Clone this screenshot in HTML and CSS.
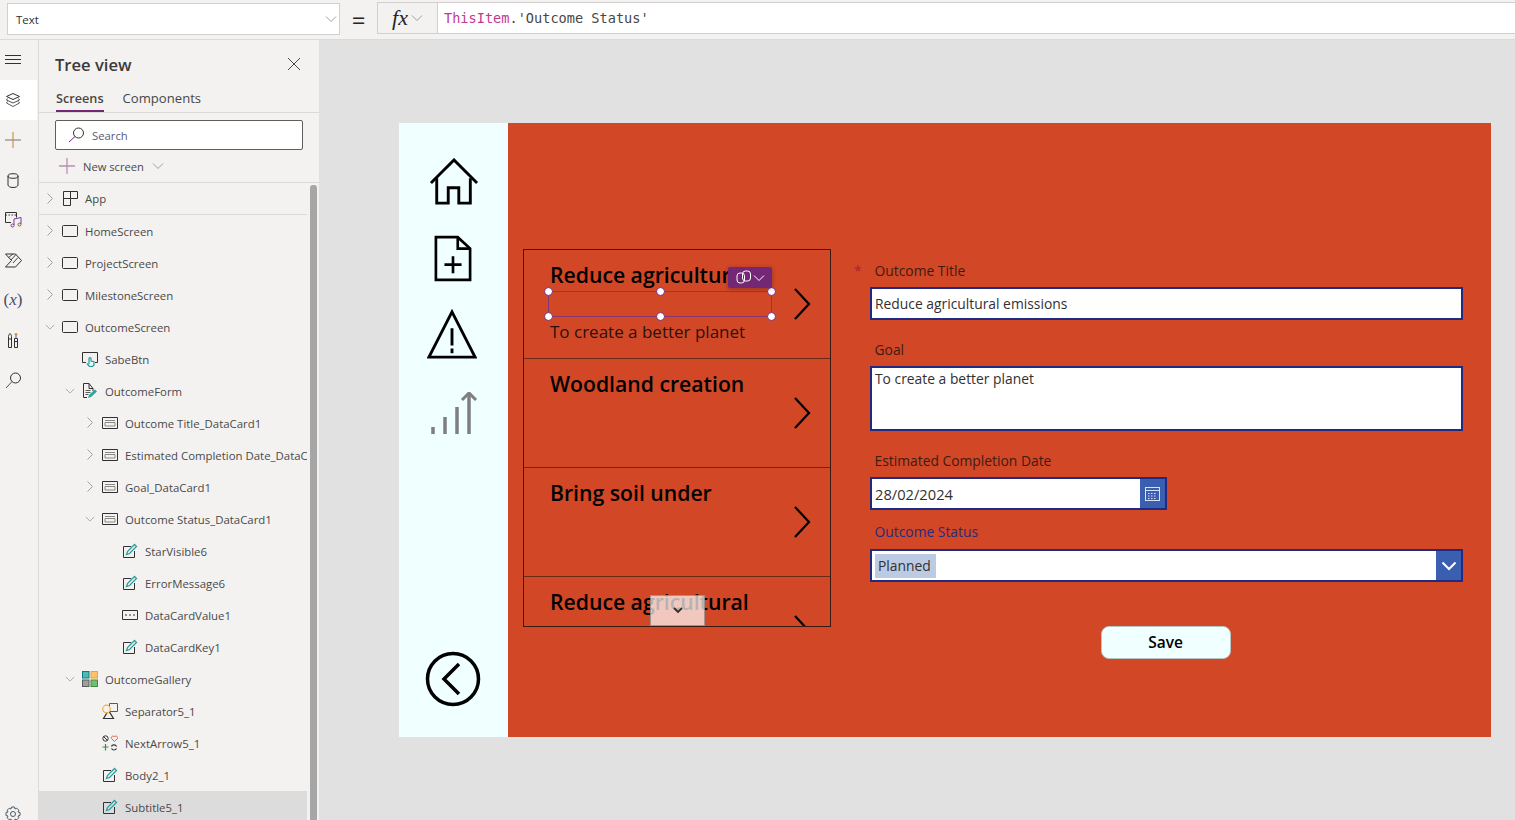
FILE: index.html
```html
<!DOCTYPE html>
<html>
<head>
    <title>Outcome Screen</title>
    <link rel="stylesheet" href="styles.css">
</head>
<body>
    <svg class="defs" width="0" height="0">
        <symbol id="chev-r" viewBox="0 0 10 12"><path d="M2.500 .5l5 5-5 5" fill="none" stroke="#a19f9d"/></symbol>
        <symbol id="chev-d" viewBox="0 0 12 10"><path d="M1 2.500l5 5 5-5" fill="none" stroke="#a19f9d"/></symbol>
        <symbol id="i-screen" viewBox="0 0 16 16"><rect x="0.500" y="2.500" width="15" height="11" rx="1" fill="none" stroke="#323130"/></symbol>
        <symbol id="i-app" viewBox="0 0 16 16"><path d="M1.500.5h14v7h-7v7h-7zM1.500 7.500h7M8.500.5v7" fill="none" stroke="#323130"/></symbol>
        <symbol id="i-card" viewBox="0 0 16 16"><path d="M.5 2.500h15v11H.5z" fill="none" stroke="#323130"/><path d="M3 5.500h10M3 7.500h10v3.500H3z" fill="none" stroke="#8a8886"/></symbol>
        <symbol id="i-edit" viewBox="0 0 16 16"><path d="M9 3.500H1.500v11h11V8" fill="none" stroke="#323130"/><path d="M4.500 11.500l1-3L12.500 1.500l2 2-7 7z" fill="none" stroke="#2a9d9d" stroke-width="1.300"/></symbol>
        <symbol id="i-input" viewBox="0 0 16 16"><path d="M.5 3.500h15v9H.5z" fill="none" stroke="#323130"/><path d="M3 8h2M7 8h2M11 8h2" stroke="#323130"/></symbol>
    </svg>

    <header class="topbar">
        <div class="prop-select">
            <span>Text</span>
            <svg class="prop-chev" width="12" height="10"><use href="#chev-d"/></svg>
        </div>
        <div class="equals">=</div>
        <div class="fx-btn">
            <span class="fx">fx</span>
            <svg width="12" height="10"><use href="#chev-d"/></svg>
        </div>
        <div class="formula"><span class="kw">ThisItem</span>.'Outcome Status'</div>
    </header>

    <div class="workspace">
        <nav class="rail">
            <div class="rail-item">
                <svg width="18" height="12" viewBox="0 0 18 12"><path d="M1 1.500h16M1 5.500h16M1 9.500h16" stroke="#323130"/></svg>
            </div>
            <div class="rail-item active">
                <svg width="16" height="16" viewBox="0 0 16 16" fill="none" stroke="#323130"><path d="M8 1.500l6.500 3L8 7.500l-6.500-3z"/><path d="M2.500 6.500L1.500 8 8 11l6.500-3-1-1.500" stroke="#4a4a6a"/><path d="M2.500 9.500l-1 1.500L8 14.500 14.500 11l-1-1.500" stroke="#6a5a4a"/></svg>
            </div>
            <div class="rail-item">
                <svg width="16" height="16" viewBox="0 0 16 16"><path d="M0 8h16" stroke="#8a8886" stroke-width="1.200"/><path d="M8 0v16" stroke="#c8944a" stroke-width="1.200"/></svg>
            </div>
            <div class="rail-item">
                <svg width="12" height="15" viewBox="0 0 12 15" fill="none" stroke="#323130"><path d="M1 3v9c0 1.400 2.200 2.500 5 2.500s5-1.100 5-2.500V3"/><ellipse cx="6" cy="3" rx="5" ry="2.300"/></svg>
            </div>
            <div class="rail-item">
                <svg width="17" height="16" viewBox="0 0 17 16" fill="none" stroke="#323130"><path d="M.5.500h11v5M.5.500v10H6"/><path d="M.5 3h11" stroke-dasharray="1.500 1.500"/><path d="M9 13V7l7-1.500V12" stroke="#7a3a9a"/><circle cx="7.500" cy="13.500" r="1.500" stroke="#7a3a9a"/><circle cx="14.500" cy="12.500" r="1.500" stroke="#8a5a2a"/></svg>
            </div>
            <div class="rail-item">
                <svg width="17" height="15" viewBox="0 0 17 15" fill="none" stroke="#323130"><path d="M.5 1h10l6 6.500-6 6.500H.5l6-6.500z"/><path d="M3.500 4.500L8 1M6 7l5-5.500M8 10l5-5.500" stroke-width=".9"/></svg>
            </div>
            <div class="rail-item rail-x">(<i>x</i>)</div>
            <div class="rail-item">
                <svg width="10" height="17" viewBox="0 0 10 17" fill="none" stroke="#323130"><path d="M.5 4.500c0-1 .5-2 1.500-3 1 1 1.500 2 1.500 3v11h-3zM6.500 6.500h3v9h-3zM.5 7h3M6.500 9.500h3"/><path d="M8 1v5.500" stroke="#7a3a9a"/><path d="M6.500 2.500h3" stroke="#c8944a"/></svg>
            </div>
            <div class="rail-item">
                <svg width="17" height="17" viewBox="0 0 17 17" fill="none" stroke="#323130"><circle cx="10.500" cy="6" r="5"/><path d="M7 9.500L1 16" stroke="#7a3a5a"/></svg>
            </div>
            <div class="rail-gear">
                <svg width="16" height="16" viewBox="0 0 16 16" fill="none" stroke="#4a5a6a"><circle cx="8" cy="8" r="2.500"/><path d="M6.500 1h3l.5 2 1.800-.8 2 2-.8 1.800 2 .5v3l-2 .5.8 1.800-2 2-1.800-.8-.5 2h-3l-.5-2-1.800.8-2-2 .8-1.800-2-.5v-3l2-.5-.8-1.800 2-2 1.800.8z"/></svg>
            </div>
        </nav>

        <aside class="panel">
            <div class="panel-head">
                <h2>Tree view</h2>
                <svg width="14" height="14" viewBox="0 0 14 14"><path d="M1 1l12 12M13 1L1 13" stroke="#4a4948"/></svg>
            </div>
            <div class="tabs">
                <span class="tab current">Screens</span>
                <span class="tab">Components</span>
            </div>
            <div class="search">
                <svg width="17" height="16" viewBox="0 0 17 16" fill="none"><circle cx="10.500" cy="6" r="5" stroke="#323130"/><path d="M7 9.500L1 15" stroke="#742774"/></svg>
                <span>Search</span>
            </div>
            <div class="new-screen">
                <svg width="16" height="16" viewBox="0 0 16 16"><path d="M8 0v16M0 8h16" stroke="#b78fb7" stroke-width="1.300"/></svg>
                <span>New screen</span>
                <svg width="12" height="10"><use href="#chev-d"/></svg>
            </div>

            <div class="tree-wrap">
                <ul class="tree">
                    <li class="row lv0 app-row"><svg class="chev" width="10" height="12"><use href="#chev-r"/></svg><svg class="ico" width="16" height="16"><use href="#i-app"/></svg><span>App</span></li>
                    <li class="row lv0"><svg class="chev" width="10" height="12"><use href="#chev-r"/></svg><svg class="ico" width="16" height="16"><use href="#i-screen"/></svg><span>HomeScreen</span></li>
                    <li class="row lv0"><svg class="chev" width="10" height="12"><use href="#chev-r"/></svg><svg class="ico" width="16" height="16"><use href="#i-screen"/></svg><span>ProjectScreen</span></li>
                    <li class="row lv0"><svg class="chev" width="10" height="12"><use href="#chev-r"/></svg><svg class="ico" width="16" height="16"><use href="#i-screen"/></svg><span>MilestoneScreen</span></li>
                    <li class="row lv0"><svg class="chev" width="10" height="12"><use href="#chev-d"/></svg><svg class="ico" width="16" height="16"><use href="#i-screen"/></svg><span>OutcomeScreen</span></li>
                    <li class="row lv1"><span class="chev"></span>
                        <svg class="ico" width="16" height="16" viewBox="0 0 16 16" fill="none"><path d="M4 11.500H.5v-10h15v10H13" stroke="#323130"/><path d="M7 13V7.500c0-1.300 2-1.300 2 0V10l3 .7V14l-1.500 1.500H7.500L5 12.500" stroke="#1f9a9a" stroke-width="1.200"/></svg>
                        <span>SabeBtn</span></li>
                    <li class="row lv1"><svg class="chev" width="10" height="12"><use href="#chev-d"/></svg>
                        <svg class="ico" width="16" height="16" viewBox="0 0 16 16" fill="none"><path d="M11 5.500V8M5 14.500H1.500V.5h5.500l4 5h-4V.5" stroke="#323130"/><path d="M3.500 7.500h5M3.500 9.500h5M3.500 11.500h3" stroke="#323130" stroke-width=".8"/><path d="M6 15l1-3 6-5.500 2 2-6 5.500z" fill="#2aa5a5"/></svg>
                        <span>OutcomeForm</span></li>
                    <li class="row lv2"><svg class="chev" width="10" height="12"><use href="#chev-r"/></svg><svg class="ico" width="16" height="16"><use href="#i-card"/></svg><span>Outcome Title_DataCard1</span></li>
                    <li class="row lv2"><svg class="chev" width="10" height="12"><use href="#chev-r"/></svg><svg class="ico" width="16" height="16"><use href="#i-card"/></svg><span class="clip-label">Estimated Completion Date_DataC</span></li>
                    <li class="row lv2"><svg class="chev" width="10" height="12"><use href="#chev-r"/></svg><svg class="ico" width="16" height="16"><use href="#i-card"/></svg><span>Goal_DataCard1</span></li>
                    <li class="row lv2"><svg class="chev" width="10" height="12"><use href="#chev-d"/></svg><svg class="ico" width="16" height="16"><use href="#i-card"/></svg><span>Outcome Status_DataCard1</span></li>
                    <li class="row lv3"><span class="chev"></span><svg class="ico" width="16" height="16"><use href="#i-edit"/></svg><span>StarVisible6</span></li>
                    <li class="row lv3"><span class="chev"></span><svg class="ico" width="16" height="16"><use href="#i-edit"/></svg><span>ErrorMessage6</span></li>
                    <li class="row lv3"><span class="chev"></span><svg class="ico" width="16" height="16"><use href="#i-input"/></svg><span>DataCardValue1</span></li>
                    <li class="row lv3"><span class="chev"></span><svg class="ico" width="16" height="16"><use href="#i-edit"/></svg><span>DataCardKey1</span></li>
                    <li class="row lv1"><svg class="chev" width="10" height="12"><use href="#chev-d"/></svg>
                        <svg class="ico" width="16" height="16" viewBox="0 0 16 16"><rect x=".5" y=".5" width="6.500" height="6.500" fill="#4fb9b9" stroke="#0f7c7c"/><rect x="9" y=".5" width="6.500" height="6.500" fill="#ffc266" stroke="#e8a33d"/><rect x=".5" y="9" width="6.500" height="6.500" fill="#a19f9d" stroke="#5a5a5a"/><rect x="9" y="9" width="6.500" height="6.500" fill="#7ab87a" stroke="#3d8f3d"/></svg>
                        <span>OutcomeGallery</span></li>
                    <li class="row lv2"><span class="chev"></span>
                        <svg class="ico" width="16" height="16" viewBox="0 0 16 16" fill="none"><path d="M7.500 .5h8v8h-8z" stroke="#0f7c7c"/><path d="M9 15.500H1.500l5-8 5 8z" stroke="#323130" stroke-width="1.200"/><circle cx="4.500" cy="6" r="3.800" fill="#f3f2f1" stroke="#f0b13d" stroke-width="1.200"/></svg>
                        <span>Separator5_1</span></li>
                    <li class="row lv2"><span class="chev"></span>
                        <svg class="ico" width="16" height="16" viewBox="0 0 16 16" fill="none"><circle cx="3.500" cy="3.500" r="2.700" stroke="#323130"/><path d="M1.500 1.500l4 4" stroke="#323130"/><path d="M12.500 6.500l-3-3c-1.200-1.800 2-3.500 3-1.500 1-2 4.200-.3 3 1.500z" stroke="#e8613d"/><path d="M3.500 9v6.500M.5 12h6" stroke="#3d8f3d" stroke-width="1.200"/><path d="M9.500 11.500c.5-2 4-2.500 5 0M14.500 13.500c-1 2-4 2-5 0" stroke="#323130" stroke-width="1.200"/></svg>
                        <span>NextArrow5_1</span></li>
                    <li class="row lv2"><span class="chev"></span><svg class="ico" width="16" height="16"><use href="#i-edit"/></svg><span>Body2_1</span></li>
                    <li class="row lv2 selected"><span class="chev"></span><svg class="ico" width="16" height="16"><use href="#i-edit"/></svg><span>Subtitle5_1</span></li>
                </ul>
                <div class="scrollbar"></div>
            </div>
        </aside>

        <main class="canvas">
            <div class="app">
                <div class="app-side">
                    <svg class="side-ico home" width="50" height="48" viewBox="0 0 52 50" fill="none" stroke="#000" stroke-width="3"><path d="M2 26L26 2l24 24"/><path d="M8 21v26h12V31h11v16h12V21"/></svg>
                    <svg class="side-ico doc" width="38" height="48" viewBox="0 0 40 50" fill="none" stroke="#000" stroke-width="2.800"><path d="M2 2h23l13 12v33H2z"/><path d="M25 2v12h13"/><path d="M20 22v18M11 31h18"/></svg>
                    <svg class="side-ico warn" width="50" height="50" viewBox="0 0 52 52" fill="none" stroke="#000" stroke-width="3"><path d="M26 3l24 47H2z"/><path d="M26 20v18M26 41v5"/></svg>
                    <svg class="side-ico dim" width="50" height="42" viewBox="0 0 50 42" fill="none" stroke="#7f7f7f" stroke-width="3.500"><path d="M5 35v7M17 25v17M29 15v27M41 1v41"/><path d="M34 8l7-7 7 7" stroke-width="3"/></svg>
                    <svg class="side-back" width="56" height="56" viewBox="0 0 56 56" fill="none" stroke="#000" stroke-width="3.500"><circle cx="28" cy="28" r="25.500"/><path d="M34 13L19 28l15 15"/></svg>
                </div>

                <div class="app-main">
                    <div class="gallery">
                        <div class="g-row">
                            <h3>Reduce agricultural</h3>
                            <p class="g-body">To create a better planet</p>
                            <svg class="g-arrow" width="18" height="32" viewBox="0 0 18 32" fill="none" stroke="#000" stroke-width="2.200"><path d="M2 1l14 15L2 31"/></svg>
                            <div class="sel-box">
                                <i class="handle tl"></i><i class="handle tm"></i><i class="handle tr"></i>
                                <i class="handle bl"></i><i class="handle bm"></i><i class="handle br"></i>
                            </div>
                            <div class="copilot">
                                <svg width="16" height="15" viewBox="0 0 16 15" fill="none" stroke="#fff"><rect x="1" y="3" width="7.500" height="10" rx="3"/><rect x="6.500" y="1" width="8" height="10" rx="3"/></svg>
                                <svg width="12" height="10" viewBox="0 0 12 10"><path d="M1 2.500l5 5 5-5" fill="none" stroke="#fff"/></svg>
                            </div>
                        </div>
                        <div class="g-row">
                            <h3>Woodland creation</h3>
                            <svg class="g-arrow" width="18" height="32" viewBox="0 0 18 32" fill="none" stroke="#000" stroke-width="2.200"><path d="M2 1l14 15L2 31"/></svg>
                        </div>
                        <div class="g-row">
                            <h3>Bring soil under</h3>
                            <svg class="g-arrow" width="18" height="32" viewBox="0 0 18 32" fill="none" stroke="#000" stroke-width="2.200"><path d="M2 1l14 15L2 31"/></svg>
                        </div>
                        <div class="g-row">
                            <h3>Reduce agricultural</h3>
                            <svg class="g-arrow" width="18" height="32" viewBox="0 0 18 32" fill="none" stroke="#000" stroke-width="2.200"><path d="M2 1l14 15L2 31"/></svg>
                        </div>
                        <div class="g-more">
                            <svg width="10" height="7" viewBox="0 0 10 7"><path d="M1 1l4 4 4-4" fill="none" stroke="#3a2a28" stroke-width="1.800"/></svg>
                        </div>
                    </div>

                    <form class="form">
                        <label class="f-label f-first"><span class="star">*</span>Outcome Title</label>
                        <div class="f-input">Reduce agricultural emissions</div>

                        <label class="f-label f-goal">Goal</label>
                        <div class="f-input f-area">To create a better planet</div>

                        <label class="f-label f-date-label">Estimated Completion Date</label>
                        <div class="f-input f-date">
                            <span class="f-text">28/02/2024</span>
                            <span class="f-btn">
                                <svg width="15" height="14" viewBox="0 0 15 14" fill="none" stroke="#d9e2f3"><rect x=".5" y=".5" width="14" height="13"/><path d="M.5 3.500h14"/><path d="M3 6.500h9M3 9h9M3 11.500h9" stroke-dasharray="1.500 1.500"/></svg>
                            </span>
                        </div>

                        <label class="f-label f-status-label">Outcome Status</label>
                        <div class="f-input f-drop">
                            <span class="chip">Planned</span>
                            <span class="f-btn">
                                <svg width="16" height="10" viewBox="0 0 16 10"><path d="M1.500 1.500L8 8l6.500-6.500" fill="none" stroke="#fff" stroke-width="2"/></svg>
                            </span>
                        </div>

                        <div class="f-actions"><button type="button" class="save">Save</button></div>
                    </form>
                </div>
            </div>
        </main>
    </div>
</body>
</html>
```

FILE: styles.css
```css
/* Page */
html, body {
    height: 100%;
}

body {
    margin: 0;
    overflow: hidden;
    background-color: #f3f2f1;
    color: #323130;
    font-family: "Open Sans", "Liberation Sans", sans-serif;
}

.defs {
    position: absolute;
}

/* Formula bar */
.topbar {
    display: flex;
    align-items: flex-start;
    height: 40px;
    padding-top: 3px;
    box-sizing: border-box;
    border-bottom: 1px solid #dcdad8;
}

.prop-select {
    display: flex;
    align-items: center;
    justify-content: space-between;
    box-sizing: border-box;
    width: 333px;
    height: 32px;
    margin-left: 7px;
    padding: 0 2px 0 8px;
    background-color: #fff;
    border: 1px solid #d2d0ce;
    font-size: 11.500px;
}

.equals {
    width: 37px;
    text-align: center;
    font-size: 24px;
    line-height: 33px;
    color: #252423;
}

.fx-btn {
    display: flex;
    align-items: center;
    justify-content: center;
    gap: 3px;
    box-sizing: border-box;
    width: 61px;
    height: 32px;
    margin-top: -1px;
    background-color: #f3f2f1;
    border: 1px solid #d2d0ce;
}

.fx {
    font-family: "Liberation Serif", serif;
    font-style: italic;
    font-size: 22px;
    color: #252423;
}

.formula {
    flex: 1;
    box-sizing: border-box;
    height: 32px;
    margin-top: -1px;
    padding-left: 6px;
    background-color: #fff;
    border-top: 1px solid #d2d0ce;
    border-bottom: 1px solid #d2d0ce;
    font-family: "DejaVu Sans Mono", monospace;
    font-size: 13.600px;
    line-height: 30px;
    color: #484644;
}

.kw {
    color: #c03a92;
}

/* Main area */
.workspace {
    display: flex;
    height: 780px;
}

.rail {
    display: flex;
    flex-direction: column;
    width: 38px;
    flex-shrink: 0;
    border-right: 1px solid #dcdad8;
}

.rail-item {
    display: flex;
    align-items: center;
    justify-content: center;
    box-sizing: border-box;
    height: 40px;
    padding-right: 12px;
    flex-shrink: 0;
}

.rail-item.active {
    background-color: #fff;
    margin-right: 1px;
    padding-right: 11px;
}

.rail-x {
    font-family: "Liberation Serif", serif;
    font-size: 17px;
    color: #4a4a6a;
}

.rail-gear {
    display: flex;
    justify-content: center;
    margin-top: auto;
    height: 14px;
    padding-right: 12px;
}

/* Tree panel */
.panel {
    width: 280px;
    flex-shrink: 0;
    display: flex;
    flex-direction: column;
    border-right: 1px solid #e1dfdd;
}

.panel-head {
    display: flex;
    align-items: center;
    justify-content: space-between;
    height: 48px;
    padding: 0 18px 0 16px;
}

.panel-head h2 {
    margin: 0;
    font-size: 16.600px;
    font-weight: 600;
    color: #3b3a39;
}

.tabs {
    display: flex;
    gap: 19px;
    height: 24px;
    padding-left: 17px;
    border-bottom: 1px solid #dcdad8;
    font-size: 13.100px;
}

.tab {
    line-height: 21px;
    color: #484644;
}

.tab.current {
    height: 24px;
    border-bottom: 2px solid #742774;
    box-sizing: border-box;
    font-size: 12.700px;
    font-weight: 600;
}

.search {
    display: flex;
    align-items: center;
    gap: 7px;
    box-sizing: border-box;
    height: 30px;
    margin: 7px 16px 0;
    padding-left: 12px;
    background-color: #fff;
    border: 1px solid #605e5c;
    border-radius: 2px;
    font-size: 11.300px;
    color: #5a5a72;
}

.new-screen {
    display: flex;
    align-items: center;
    height: 32px;
    padding-left: 20px;
    border-bottom: 1px solid #dcdad8;
    font-size: 11.200px;
    color: #4a4948;
}

.new-screen span {
    margin: 0 8px;
}

.tree-wrap {
    display: flex;
    flex: 1;
    min-height: 0;
}

.tree {
    flex: 1;
    min-width: 0;
    margin: 0;
    padding: 0;
    list-style: none;
    overflow: hidden;
}

.row {
    display: flex;
    align-items: center;
    height: 32px;
    box-sizing: border-box;
    white-space: nowrap;
    overflow: hidden;
    font-size: 11.400px;
    color: #4a4948;
}

.lv0 { padding-left: 6px; }
.lv1 { padding-left: 26px; }
.lv2 { padding-left: 46px; }
.lv3 { padding-left: 66px; }

.app-row {
    border-bottom: 1px solid #dcdad8;
}

.selected {
    background-color: #dcdcdc;
}

.chev {
    flex-shrink: 0;
    width: 10px;
    height: 12px;
    margin-right: 7px;
}

.ico {
    flex-shrink: 0;
    margin-right: 7px;
}

.scrollbar {
    width: 7px;
    margin: 2px 2px 0 3px;
    background-color: #a6a6a6;
    border-radius: 3px 3px 0 0;
}

/* Canvas */
.canvas {
    flex: 1;
    min-width: 0;
    padding: 83px 0 0 79px;
    background-color: #e1e1e1;
}

.app {
    display: flex;
    width: 1092px;
    height: 614px;
}

.app-side {
    display: flex;
    flex-direction: column;
    align-items: center;
    width: 109px;
    flex-shrink: 0;
    background-color: #f0ffff;
}

.home {
    margin-top: 35px;
}

.doc {
    margin: 29px 2px 0 0;
}

.warn {
    margin: 26px 4px 0 0;
}

.dim {
    margin: 33px 2px 0 0;
}

.side-back {
    margin: auto 2px 30px 0;
}

.app-main {
    flex: 1;
    display: flex;
    align-items: flex-start;
    background-color: #d24726;
}

/* Gallery */
.gallery {
    position: relative;
    width: 308px;
    height: 378px;
    margin: 126px 0 0 15px;
    box-sizing: border-box;
    border: 1px solid #3b1a12;
    overflow: hidden;
    flex-shrink: 0;
}

.g-row {
    position: relative;
    height: 109px;
    box-sizing: border-box;
    padding: 8px 0 0 26px;
    border-bottom: 1px solid #6a2a18;
}

.g-row h3 {
    margin: 0;
    font-size: 21.200px;
    font-weight: 600;
    line-height: 33px;
    color: #000;
}

.g-body {
    margin: 29px 0 0;
    font-size: 17px;
    line-height: 24px;
    color: #2a120c;
}

.g-arrow {
    position: absolute;
    left: 269px;
    top: 38px;
}

.sel-box {
    position: absolute;
    left: 24px;
    top: 41px;
    width: 224px;
    height: 26px;
    box-sizing: border-box;
    border: 1px solid #8a3570;
}

.handle {
    position: absolute;
    width: 9px;
    height: 9px;
    background-color: #fff;
    border: 1px solid #742774;
    border-radius: 50%;
    box-sizing: border-box;
}

.tl, .bl { left: -5px; }
.tm, .bm { left: 107px; }
.tr, .br { right: -5px; }
.tl, .tm, .tr { top: -5px; }
.bl, .bm, .br { bottom: -5px; }

.copilot {
    position: absolute;
    left: 204px;
    top: 17px;
    display: flex;
    align-items: center;
    justify-content: center;
    gap: 1px;
    width: 44px;
    height: 21px;
    background-color: #742774;
    border-radius: 2px;
    box-shadow: 0 1px 4px rgba(60, 20, 30, 0.4);
}

.g-more {
    position: absolute;
    left: 126px;
    bottom: 0;
    display: flex;
    align-items: flex-end;
    justify-content: center;
    padding-bottom: 11px;
    box-sizing: border-box;
    width: 55px;
    height: 31px;
    background-color: rgba(255, 255, 255, 0.7);
    border: 1px solid rgba(90, 90, 90, 0.5);
}

/* Form */
.form {
    flex: 1;
    display: flex;
    flex-direction: column;
    margin: 0 28px 0 39px;
}

.f-label {
    position: relative;
    padding-left: 4.500px;
    font-size: 13.850px;
    line-height: 20px;
    color: #3f1c12;
}

.f-first { margin-top: 138px; height: 26px; }
.f-goal { margin-top: 20px; height: 26px; }
.f-date-label { margin-top: 20px; height: 26px; }
.f-status-label { margin-top: 12px; height: 27px; color: #2b2a7c; }

.star {
    position: absolute;
    left: -16px;
    color: #a4262c;
}

.f-input {
    display: flex;
    align-items: center;
    box-sizing: border-box;
    height: 33px;
    padding-left: 3px;
    background-color: #fff;
    border: 2px solid #1f2a80;
    font-size: 13.850px;
    color: #323130;
}

.f-area {
    height: 65px;
    align-items: flex-start;
    padding-top: 1px;
}

.f-date {
    width: 297px;
    justify-content: space-between;
}

.f-text {
    font-size: 14.700px;
}

.f-drop {
    justify-content: space-between;
}

.f-btn {
    display: flex;
    align-items: center;
    justify-content: center;
    align-self: stretch;
    width: 25px;
    background-color: #3a5fb0;
}

.chip {
    padding: 0 5px 0 3px;
    line-height: 24px;
    background-color: #bccbe3;
}

.f-actions {
    display: flex;
    justify-content: center;
    margin-top: 44px;
    padding-right: 2px;
}

.save {
    width: 130px;
    height: 33px;
    padding: 0 0 2px;
    background-color: #f0ffff;
    border: 1px solid #b8c4c4;
    border-radius: 8px;
    font-family: "Open Sans", sans-serif;
    font-size: 15.500px;
    font-weight: 600;
    color: #000;
}
```
